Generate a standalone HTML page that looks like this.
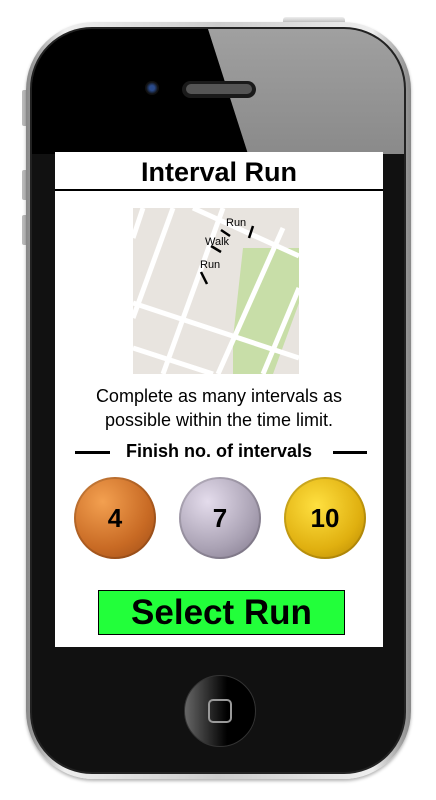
<!DOCTYPE html>
<html><head><style>
*{margin:0;padding:0;box-sizing:border-box}
body{width:436px;height:800px;background:#fff;position:relative;overflow:hidden;font-family:"Liberation Sans",sans-serif}
.abs{position:absolute}
.body{left:26px;top:22px;width:385px;height:757px;border-radius:68px;background:linear-gradient(90deg,#888,#eee 10%,#ccc 50%,#eee 90%,#888);box-shadow:0 2px 3px rgba(0,0,0,.3)}
.face{left:30px;top:27px;width:376px;height:747px;border-radius:62px;background:#111;overflow:hidden;border:2px solid #222}
.glare{left:0;top:0;width:376px;height:125px;background:linear-gradient(180deg,#a0a0a0,#8a8a8a);clip-path:polygon(176px 0,376px 0,376px 125px,216px 125px)}
.blk{left:0;top:0;width:260px;height:125px;background:#000;clip-path:polygon(0 0,176px 0,216px 125px,0 125px)}
.screen{left:55px;top:152px;width:328px;height:495px;background:#fff}
.title{left:0;top:0;width:328px;height:39px;border-bottom:2px solid #000;text-align:center;font-weight:bold;font-size:27px;line-height:40px}
.txt{left:0;width:328px;text-align:center;font-size:18px;line-height:24px}
.medal{width:82px;height:82px;border-radius:50%;top:477px;text-align:center;line-height:82px;font-weight:bold;font-size:26px;box-shadow:inset 0 0 0 2px rgba(0,0,0,.15)}
</style></head><body>
<div class="abs" style="left:283px;top:17px;width:62px;height:8px;border-radius:3px;background:linear-gradient(#eee,#aaa)"></div>
<div class="abs" style="left:22px;top:90px;width:6px;height:36px;border-radius:2px;background:#bbb"></div>
<div class="abs" style="left:22px;top:170px;width:6px;height:30px;border-radius:2px;background:#bbb"></div>
<div class="abs" style="left:22px;top:215px;width:6px;height:30px;border-radius:2px;background:#bbb"></div>
<div class="abs body"></div>
<div class="abs face">
 <div class="abs blk"></div>
 <div class="abs glare"></div>
 <div class="abs" style="left:113px;top:52px;width:14px;height:14px;border-radius:50%;background:radial-gradient(#2a4a8a 25%,#111 60%)"></div>
 <div class="abs" style="left:150px;top:52px;width:74px;height:17px;border-radius:9px;background:#1a1a1a"><div style="margin:3px 4px;height:10px;border-radius:5px;background:#555"></div></div>
 <div class="abs" style="left:152px;top:646px;width:72px;height:72px;border-radius:50%;background:linear-gradient(90deg,#666,#000 60%);border:1px solid #333"></div>
 <div class="abs" style="left:176px;top:670px;width:24px;height:24px;border-radius:5px;border:2px solid #999"></div>
</div>
<div class="abs screen">
 <div class="abs title">Interval Run</div>
 <svg class="abs" style="left:78px;top:56px" width="166" height="166" viewBox="0 0 166 166">
  <rect width="166" height="166" fill="#e8e4df"/>
  <polygon points="110,40 166,40 166,95 140,166 100,166 100,130" fill="#c8dea8"/>
  <g stroke="#fff" stroke-width="5" fill="none">
   <path d="M60,0 L166,48"/><path d="M0,95 L166,150"/><path d="M0,140 L80,166"/>
   <path d="M40,0 L0,110"/><path d="M90,0 L30,166"/><path d="M150,20 L85,166"/><path d="M166,80 L130,166"/><path d="M10,0 L0,30"/>
  </g>
  <g stroke="#000" stroke-width="2.5"><path d="M88,22 L97,28"/><path d="M120,18 L116,30"/><path d="M78,38 L88,44"/><path d="M68,64 L74,76"/></g>
  <g font-size="11" font-family="Liberation Sans" fill="#000"><text x="93" y="18">Run</text><text x="72" y="37">Walk</text><text x="67" y="60">Run</text></g>
 </svg>
 <div class="abs txt" style="top:232px">Complete as many intervals as<br>possible within the time limit.</div>
 <div class="abs" style="left:20px;top:299px;width:35px;height:3px;background:#000"></div>
 <div class="abs" style="left:278px;top:299px;width:34px;height:3px;background:#000"></div>
 <div class="abs txt" style="top:287px;font-weight:bold;font-size:18px">Finish no. of intervals</div>
</div>
<div class="abs" style="left:98px;top:590px;width:247px;height:45px;background:#22ff3a;border:1px solid #000;text-align:center;font-weight:bold;font-size:35px;line-height:43px">Select Run</div>
<div class="abs medal" style="left:74px;background:radial-gradient(circle at 35% 30%,#f3a050,#c86a24 60%,#9a4a16)">4</div>
<div class="abs medal" style="left:179px;background:radial-gradient(circle at 35% 30%,#e4dcec,#aaa2b4 60%,#7d7488)">7</div>
<div class="abs medal" style="left:284px;background:radial-gradient(circle at 40% 35%,#ffe040,#e0b010 60%,#b08000)">10</div>
</body></html>
